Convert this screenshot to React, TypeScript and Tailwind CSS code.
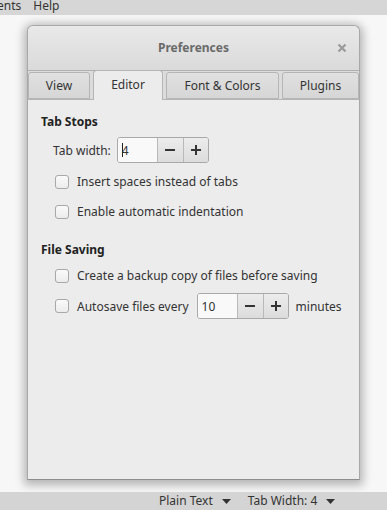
import React from "react";

const font = { fontFamily: '"Noto Sans", "Open Sans", sans-serif' };

const Spinner = ({ value, caret }: { value: string; caret?: boolean }) => (
  <div className="flex h-[26px] rounded-[3px] border border-[#a9a9a9] overflow-hidden bg-[#f7f7f7]">
    <div className="w-[39px] flex items-center pl-[4px] bg-[#f9f9f9] text-[#333]">
      {caret && <span className="w-px h-[14px] bg-[#222] -mr-px" />}
      {value}
    </div>
    <button className="w-[26px] flex items-center justify-center border-l border-[#b9b9b9] bg-gradient-to-b from-[#ececec] to-[#dcdcdc]">
      <svg width="12" height="12" viewBox="0 0 12 12"><path d="M1 6h10" stroke="#333" strokeWidth="2" /></svg>
    </button>
    <button className="w-[25px] flex items-center justify-center border-l border-[#b9b9b9] bg-gradient-to-b from-[#ececec] to-[#dcdcdc]">
      <svg width="12" height="12" viewBox="0 0 12 12"><path d="M1 6h10M6 1v10" stroke="#333" strokeWidth="2" /></svg>
    </button>
  </div>
);

const Check = ({ label }: { label: string }) => (
  <div className="flex items-center gap-[8px] whitespace-nowrap">
    <span className="w-[14px] h-[14px] rounded-[3px] border border-[#a8a8a8] bg-gradient-to-b from-[#fafafa] to-[#ececec]" />
    <span>{label}</span>
  </div>
);

const Tab = ({ label, w, active }: { label: string; w: string; active?: boolean }) =>
  active ? (
    <div className={`${w} h-[30px] -mb-px flex items-center justify-center rounded-t-[4px] border border-b-0 border-[#b5b5b5] bg-[#ececec] pb-[3px] text-[#333] relative z-10`}>{label}</div>
  ) : (
    <div className={`${w} h-[27px] flex items-center justify-center rounded-t-[3px] border border-[#b5b5b5] bg-gradient-to-b from-[#e0e0e0] to-[#d6d6d6] text-[#333]`}>{label}</div>
  );

const Arrow = () => (
  <svg width="9" height="5" viewBox="0 0 9 5"><path d="M0 0h9L4.5 5z" fill="#333" /></svg>
);

export default function App() {
  return (
    <div className="w-[387px] h-[510px] flex flex-col bg-[#f7f7f7] text-[12px] leading-[17px] text-[#333] overflow-hidden" style={font}>
      <div className="h-[15px] bg-[#d6d6d6] flex items-start gap-[12px] -ml-[3px] leading-[12px]">
        <span>ents</span>
        <span>Help</span>
      </div>
      <div className="flex-1 pl-[27px] pt-[10px]">
        <div className="w-[333px] h-[455px] flex flex-col rounded-t-[6px] border border-[#a8a8a8] border-b-[#8c8c8c] bg-[#ececec] shadow-[0_2px_10px_3px_rgba(0,0,0,0.28)]">
          <div className="h-[45px] flex items-center justify-center relative rounded-t-[6px] bg-gradient-to-b from-[#e9e9e9] to-[#dadada] border-b border-[#b1b1b1] pb-[2px]">
            <span className="font-bold text-[#6a6a6a]">Preferences</span>
            <svg className="absolute right-[12px] top-[17px]" width="10" height="10" viewBox="0 0 10 10">
              <path d="M1.5 1.5l7 7M8.5 1.5l-7 7" stroke="#9a9a9a" strokeWidth="2.2" />
            </svg>
          </div>
          <div className="h-[29px] flex items-end gap-[3px] bg-[#dcdcdc] border-b border-[#b5b5b5] pt-[1px]">
            <Tab label="View" w="w-[62px]" />
            <Tab label="Editor" w="w-[70px]" active />
            <Tab label="Font & Colors" w="w-[113px]" />
            <Tab label="Plugins" w="w-[77px]" />
          </div>
          <div className="flex-1 px-[13px] pt-[13px]">
            <div className="font-bold text-[#222] leading-[18px]">Tab Stops</div>
            <div className="flex items-center mt-[6px] ml-[12px] gap-[6px]">
              <span>Tab width:</span>
              <Spinner value="4" caret />
            </div>
            <div className="ml-[14px] mt-[10px] flex flex-col gap-[13px]">
              <Check label="Insert spaces instead of tabs" />
              <Check label="Enable automatic indentation" />
            </div>
            <div className="font-bold text-[#222] leading-[18px] mt-[21px]">File Saving</div>
            <div className="ml-[14px] mt-[8px] flex flex-col gap-[9px]">
              <Check label="Create a backup copy of files before saving" />
              <div className="flex items-center">
                <Check label="Autosave files every" />
                <div className="ml-[8px]"><Spinner value="10" /></div>
                <span className="ml-[7px]">minutes</span>
              </div>
            </div>
          </div>
        </div>
      </div>
      <div className="h-[18px] bg-[#d4d4d4] flex items-center pl-[159px] gap-[17px] leading-none">
        <span className="flex items-center gap-[9px]">Plain Text<Arrow /></span>
        <span className="flex items-center gap-[9px]">Tab Width: 4<Arrow /></span>
      </div>
    </div>
  );
}
